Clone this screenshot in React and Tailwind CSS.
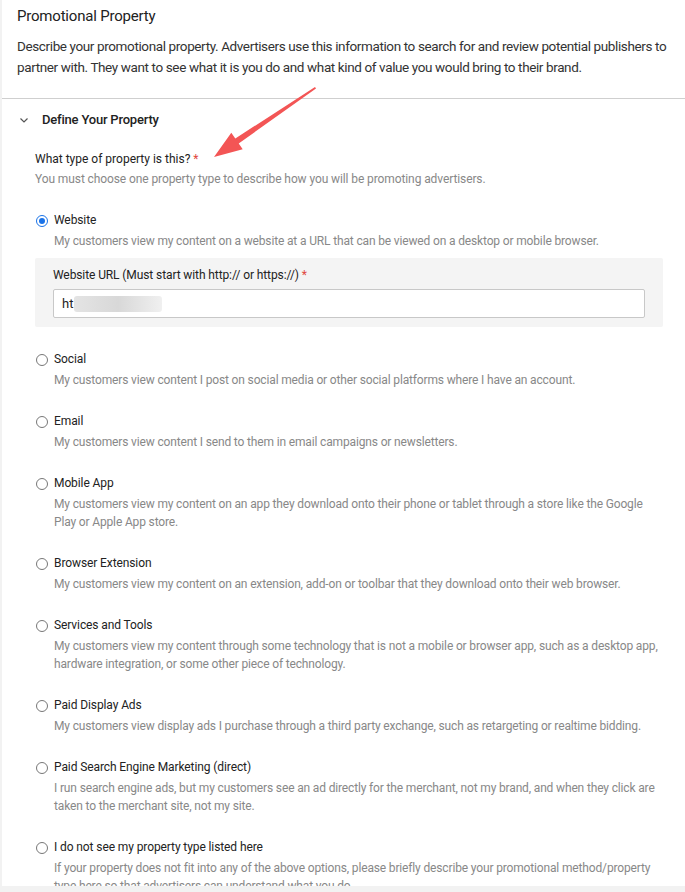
import React from "react";

const options = [
  { label: "Website", desc: "My customers view my content on a website at a URL that can be viewed on a desktop or mobile browser.", checked: true },
  { label: "Social", desc: "My customers view content I post on social media or other social platforms where I have an account." },
  { label: "Email", desc: "My customers view content I send to them in email campaigns or newsletters." },
  { label: "Mobile App", desc: "My customers view my content on an app they download onto their phone or tablet through a store like the Google Play or Apple App store." },
  { label: "Browser Extension", desc: "My customers view my content on an extension, add-on or toolbar that they download onto their web browser." },
  { label: "Services and Tools", desc: "My customers view my content through some technology that is not a mobile or browser app, such as a desktop app, hardware integration, or some other piece of technology." },
  { label: "Paid Display Ads", desc: "My customers view display ads I purchase through a third party exchange, such as retargeting or realtime bidding." },
  { label: "Paid Search Engine Marketing (direct)", desc: "I run search engine ads, but my customers see an ad directly for the merchant, not my brand, and when they click are taken to the merchant site, not my site." },
  { label: "I do not see my property type listed here", desc: "If your property does not fit into any of the above options, please briefly describe your promotional method/property type here so that advertisers can understand what you do." },
];

function Radio({ checked }) {
  if (checked) {
    return (
      <span className="mt-[3.5px] flex h-[12px] w-[12px] shrink-0 items-center justify-center rounded-full border-[1.5px] border-[#1a73e8] bg-white">
        <span className="h-[6px] w-[6px] rounded-full bg-[#1a73e8]" />
      </span>
    );
  }
  return <span className="mt-[3.5px] h-[12px] w-[12px] shrink-0 rounded-full border border-[#777] bg-white" />;
}

export default function App() {
  return (
    <div className="h-[892px] overflow-hidden bg-[#f2f2f2] pl-[2px]" style={{ fontFamily: "Roboto, 'Liberation Sans', sans-serif" }}>
      <div className="relative h-[886px] overflow-hidden bg-white">
        <div className="px-[15px] pt-[5px] pb-[20px]">
          <h2 className="text-[15px] leading-[22px] tracking-[-0.2px] text-[#222]">Promotional Property</h2>
          <p className="mt-[9px] text-[13.5px] leading-[21px] tracking-[-0.38px] text-[#333]">
            Describe your promotional property. Advertisers use this information to search for and review potential publishers to partner with. They want to see what it is you do and what kind of value you would bring to their brand.
          </p>
        </div>
        <div className="border-t border-[#cfcfcf]" />
        <div className="flex items-center pl-[16px] pt-[11px]">
          <svg width="12" height="12" viewBox="0 0 12 12" className="text-[#555]">
            <path d="M2.5 4.5 L6 8 L9.5 4.5" fill="none" stroke="currentColor" strokeWidth="1.2" />
          </svg>
          <span className="ml-[12px] text-[13px] font-medium leading-[20px] tracking-[-0.2px] text-[#222]">Define Your Property</span>
        </div>
        <div className="pl-[33px] pr-[22px] pt-[21px]">
          <div className="text-[12px] leading-[16px] text-[#222]">
            What type of property is this? <span className="text-[#e0483e]">*</span>
          </div>
          <div className="mt-[4px] text-[12px] leading-[16px] tracking-[-0.1px] text-[#888]">
            You must choose one property type to describe how you will be promoting advertisers.
          </div>
          <div className="mt-[24px] flex flex-col gap-[23px]">
            {options.map((o) => (
              <div key={o.label}>
                <div className="flex gap-[6px] pl-[1px]">
                  <Radio checked={o.checked} />
                  <div>
                    <div className="text-[12px] leading-[19px] tracking-[-0.1px] text-[#222]">{o.label}</div>
                    <div className="mt-[2px] text-[12px] leading-[18px] tracking-[-0.15px] text-[#888]">{o.desc}</div>
                  </div>
                </div>
                {o.checked && (
                  <div className="mt-[8px] rounded-[2px] bg-[#f4f4f4] pl-[18px] pr-[18px] pt-[8px] pb-[9px]">
                    <div className="text-[12px] leading-[18px] tracking-[-0.1px] text-[#222]">
                      Website URL (Must start with http:// or https://) <span className="text-[#e0483e]">*</span>
                    </div>
                    <div className="mt-[5px] flex h-[29px] items-center rounded-[2px] border border-[#c8c8c8] bg-white px-[8px] text-[13px] text-[#222]">
                      ht
                      <span className="ml-[1px] h-[16px] w-[88px] rounded-[3px] bg-gradient-to-r from-[#e4e4e4] via-[#d8d8d8] to-[#f0f0f0]" />
                    </div>
                  </div>
                )}
              </div>
            ))}
          </div>
        </div>
        <svg className="pointer-events-none absolute left-0 top-0" width="685" height="892">
          <polygon
            fill="#f35555"
            points="313,87 314,88.5 236.7,143.5 240.7,149.2 212,157 229.3,132.8 233.3,138.5"
          />
        </svg>
      </div>
    </div>
  );
}
